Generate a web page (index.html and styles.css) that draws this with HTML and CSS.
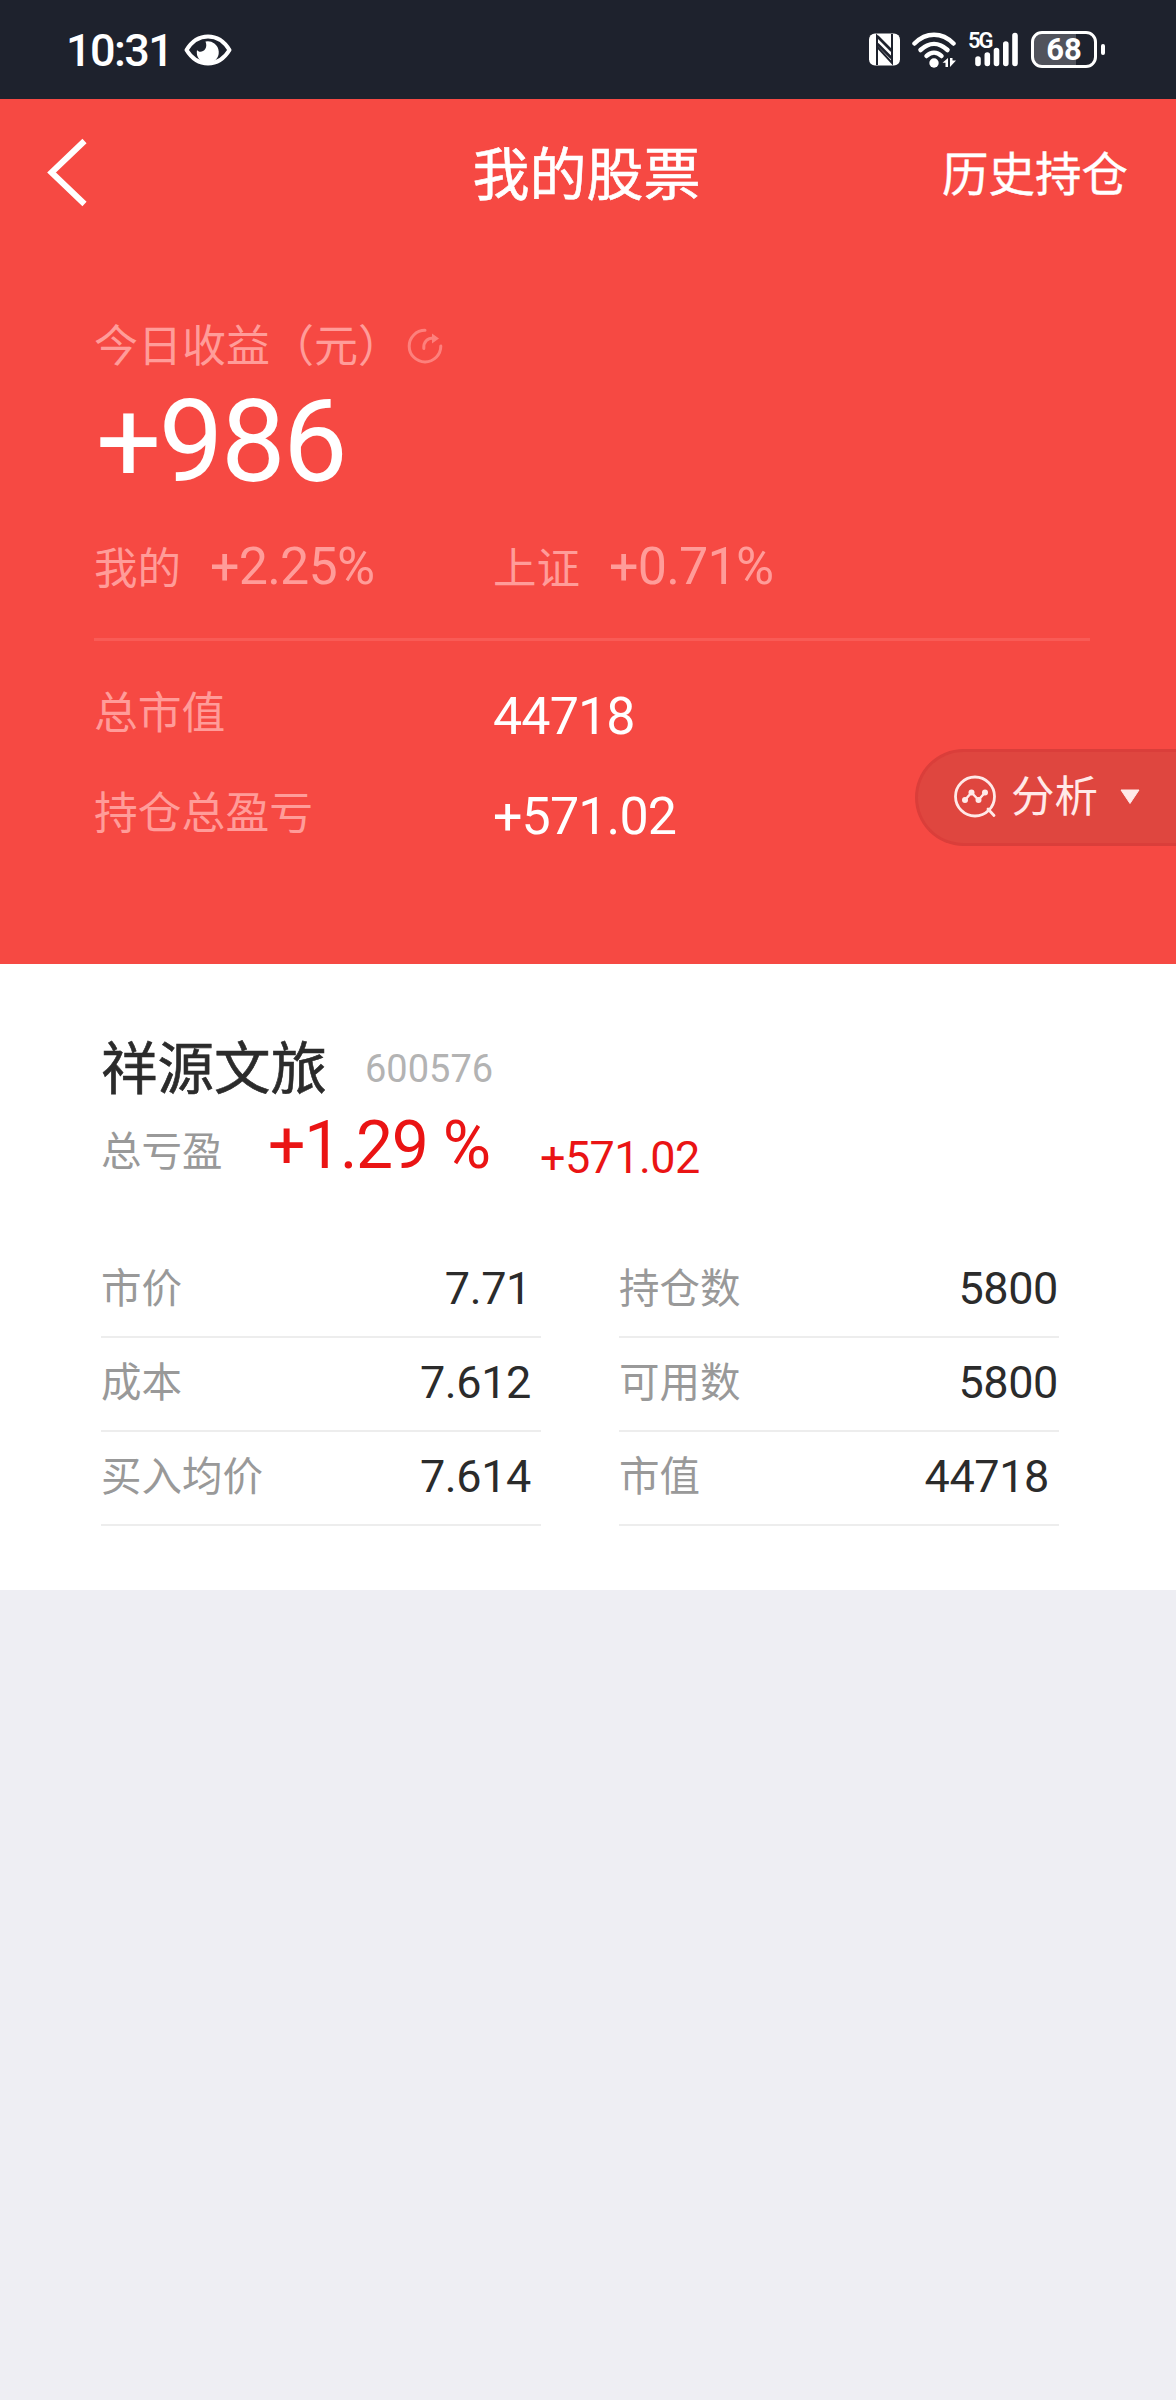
FILE: index.html
```html
<!DOCTYPE html>
<html lang="zh-CN">
<head>
    <meta charset="UTF-8">
    <meta name="viewport" content="width=device-width, initial-scale=1.0">
    <title>我的股票</title>
    <link rel="stylesheet" href="styles.css">
</head>
<body>
    <div class="status-bar">
        <span class="time">10:31</span>
        <svg class="eye" width="48" height="32" viewBox="0 0 48 32">
            <path d="M2.5 16C8 7 15 2.5 24 2.5S40 7 45.500 16C40 25 33 29.500 24 29.500S8 25 2.500 16Z" fill="none" stroke="#fff" stroke-width="4" stroke-linejoin="round"/>
            <path d="M21.500 7.500A11 11 0 1 1 13 16C16 20.500 25 16 21.500 7.500Z" fill="#fff"/>
        </svg>
        <div class="status-icons">
            <svg class="nfc" width="31" height="33" viewBox="0 0 31 33">
                <rect x="0" y="0.500" width="31" height="32" rx="6" fill="#fff"/>
                <path d="M8 32V3L22.700 18M23 1V30L8.300 14" fill="none" stroke="#1e222d" stroke-width="2"/>
                <path d="M8.500 3.500l14 14M8.500 11l14 14" stroke="#1e222d" stroke-width="2.600"/>
            </svg>
            <svg class="wifi" width="45" height="36" viewBox="0 0 45 36">
                <g fill="none" stroke="#fff" stroke-width="4.500" stroke-linecap="round">
                    <path d="M2.500 11.500C14-.2 30-.2 41.500 11.500"/>
                    <path d="M8.500 18C17 10 27 10 35.500 18"/>
                    <path d="M14.500 24C19 19.500 25 19.500 29.500 24"/>
                </g>
                <circle cx="22" cy="31" r="4.700" fill="#fff"/>
                <path d="M36 26v9h-2.500v-4.200H30.500ZM38 35v-9h2.500v2.500h3.500Z" fill="#fff"/>
            </svg>
            <div class="signal">
                <span class="network">5G</span>
                <svg width="44" height="35" viewBox="0 0 44 35">
                    <path d="M3 27v4.500M12.300 23v8.500M21.500 18.500v13M30.800 12v19.500M40 3.500v28" stroke="#fff" stroke-width="5.600" stroke-linecap="round"/>
                </svg>
            </div>
            <div class="battery"><span>68</span></div>
        </div>
    </div>

    <div class="header">
        <div class="nav">
            <svg class="back" width="42" height="70" viewBox="0 0 42 70">
                <path d="M39.500 3L6.500 34.500L39.500 66" fill="none" stroke="#fff" stroke-width="6"/>
            </svg>
            <h1>我的股票</h1>
            <a class="history">历史持仓</a>
        </div>

        <div class="summary">
            <div class="today">
                <span>今日收益（元）</span>
                <svg width="36" height="36" viewBox="0 0 36 36">
                    <g fill="none" stroke="#fd807c" stroke-width="3" stroke-linecap="round">
                        <path d="M18 2.300A15.800 15.800 0 1 0 33.800 18"/>
                        <path d="M16.800 20.500C16.500 14 20 10 27 10"/>
                    </g>
                    <path d="M25 5.500L32 10.500L25 15.500Z" fill="#fd807c"/>
                </svg>
            </div>
            <div class="today-value">+986</div>
            <div class="compare">
                <div><span class="name">我的</span><span class="rate">+2.25%</span></div>
                <div><span class="name">上证</span><span class="rate">+0.71%</span></div>
            </div>
            <div class="total"><span>总市值</span><b>44718</b></div>
            <div class="total"><span>持仓总盈亏</span><b>+571.02</b></div>
        </div>

        <div class="analysis">
            <svg width="44" height="44" viewBox="0 0 44 44">
                <g fill="none" stroke="#ffe9e8" stroke-width="2.800" stroke-linecap="round">
                    <circle cx="22" cy="21.500" r="19.500"/>
                    <path d="M35 34l6 6.500"/>
                    <path d="M12 25l6.500-7.500L25.500 25L32 17.500" stroke-width="2.400"/>
                </g>
                <g fill="#ffe9e8">
                    <circle cx="12" cy="25" r="3"/>
                    <circle cx="18.500" cy="17.500" r="3"/>
                    <circle cx="25.500" cy="25" r="3"/>
                    <circle cx="32" cy="17.500" r="3"/>
                </g>
            </svg>
            <span>分析</span>
            <svg class="caret" width="20" height="16" viewBox="0 0 20 16">
                <path d="M1 1h18L10 14.500Z" fill="#ffe9e8" stroke="#ffe9e8" stroke-linejoin="round"/>
            </svg>
        </div>
    </div>

    <div class="stock">
        <div class="stock-name">
            <h2>祥源文旅</h2>
            <span>600576</span>
        </div>
        <div class="profit">
            <span class="label">总亏盈</span>
            <span class="percent">+1.29 %</span>
            <span class="amount">+571.02</span>
        </div>
        <div class="grid">
            <div class="cell"><span>市价</span><b>7.71</b></div>
            <div class="cell"><span>持仓数</span><b class="flush">5800</b></div>
            <div class="cell"><span>成本</span><b>7.612</b></div>
            <div class="cell"><span>可用数</span><b class="flush">5800</b></div>
            <div class="cell"><span>买入均价</span><b>7.614</b></div>
            <div class="cell"><span>市值</span><b>44718</b></div>
        </div>
    </div>
</body>
</html>
```

FILE: styles.css
```css
* {
    margin: 0;
    padding: 0;
    box-sizing: border-box;
}

body {
    min-height: 2400px;
    background-color: #eeeef3;
    font-family: Roboto, "Noto Sans CJK SC", sans-serif;
    white-space: nowrap;
}

svg {
    display: block;
    flex-shrink: 0;
}

b, h1, h2 {
    font-weight: 400;
}

/* status bar */
.status-bar {
    display: flex;
    align-items: center;
    height: 99px;
    padding: 0 71px 0 66px;
    background-color: #1e222d;
    color: #fff;
}

.time {
    width: 118px;
    padding-top: 1px;
    font-size: 45px;
    font-weight: 500;
    line-height: 99px;
    letter-spacing: -1.6px;
}

.status-icons {
    display: flex;
    align-items: center;
    margin-left: auto;
}

.wifi {
    margin-left: 12px;
}

.signal {
    position: relative;
    margin-left: 18px;
}

.network {
    position: absolute;
    left: -7px;
    top: 1px;
    font-size: 22px;
    font-weight: 600;
    line-height: 16px;
    letter-spacing: -2px;
}

.battery {
    position: relative;
    width: 66px;
    height: 37px;
    margin-left: 12px;
    margin-right: 8px;
    border: 3px solid #fff;
    border-radius: 11px;
    background: linear-gradient(90deg, #51535c 70%, #1e222d 70%);
    font-size: 31px;
    font-weight: 700;
    line-height: 32px;
    text-align: center;
}

.battery::after {
    content: "";
    position: absolute;
    right: -11px;
    top: 10px;
    width: 4px;
    height: 11px;
    border-radius: 2px;
    background-color: #fff;
}

/* red header */
.header {
    position: relative;
    height: 865px;
    background-color: #f64943;
    color: #fff;
}

.nav {
    display: grid;
    grid-template-columns: 1fr auto 1fr;
    align-items: center;
    height: 148px;
    padding: 0 48px 0 45px;
}

.nav h1 {
    padding-top: 5px;
    font-size: 57px;
    line-height: 80px;
    -webkit-text-stroke: 0.6px;
}

.history {
    justify-self: end;
    padding-top: 3px;
    font-size: 46.5px;
    line-height: 80px;
    -webkit-text-stroke: 0.4px;
}

.summary {
    padding: 64px 86px 0 94px;
}

.today {
    display: flex;
    align-items: center;
    gap: 5px;
    height: 70px;
    color: #ff9c99;
    font-size: 44px;
}

.today span {
    line-height: 64px;
    padding-top: 1px;
}

.today-value {
    height: 126px;
    padding-left: 2px;
    font-size: 115px;
    line-height: 122px;
    letter-spacing: -2.5px;
}

.compare {
    display: grid;
    grid-template-columns: 399px 1fr;
    height: 134px;
    padding-top: 28px;
    border-bottom: 3px solid #f95b56;
    color: #ff9c99;
    line-height: 68px;
}

.compare div {
    display: flex;
}

.name {
    width: 116px;
    padding-top: 1px;
    font-size: 43.5px;
}

.rate {
    margin-top: -2px;
    font-size: 52px;
    letter-spacing: -0.8px;
}

.total {
    display: grid;
    grid-template-columns: 399px 1fr;
    height: 100px;
    color: #ff9c99;
    font-size: 43.8px;
    line-height: 102px;
}

.compare + .total {
    margin-top: 22px;
}

.total b {
    padding-top: 3px;
    color: #fff;
    font-size: 52px;
    letter-spacing: -0.9px;
}

.analysis {
    position: absolute;
    right: 0;
    top: 650px;
    display: flex;
    align-items: center;
    width: 261px;
    height: 97px;
    padding-left: 35px;
    padding-bottom: 2px;
    border: 3px solid #da3e3a;
    border-right: none;
    border-radius: 49px 0 0 49px;
    background-color: #df463f;
    color: #ffe9e8;
    font-size: 43.5px;
}

.analysis span {
    margin-left: 14px;
    padding-top: 2px;
    line-height: 64px;
}

.caret {
    margin-left: 22px;
}

/* stock card */
.stock {
    height: 626px;
    padding: 64px 117px 0 101px;
    background-color: #fff;
    color: #2b2b2b;
}

.stock-name {
    display: flex;
    height: 80px;
    line-height: 80px;
}

.stock-name h2 {
    width: 264px;
    padding-top: 2px;
    font-size: 56.5px;
    -webkit-text-stroke: 0.6px;
}

.stock-name span {
    padding-top: 1px;
    color: #b3b3b3;
    font-size: 38px;
}

.profit {
    display: flex;
    height: 80px;
    color: #ea1414;
    line-height: 80px;
}

.profit .label {
    width: 167px;
    padding-top: 4px;
    color: #999;
    font-size: 40.5px;
}

.percent {
    width: 272px;
    margin-top: -2px;
    font-size: 66px;
    letter-spacing: -1.3px;
}

.amount {
    padding-top: 10px;
    font-size: 45px;
    letter-spacing: -0.6px;
}

.grid {
    display: grid;
    grid-template-columns: 440px 440px;
    column-gap: 78px;
    margin-top: 56px;
}

.cell {
    display: flex;
    justify-content: space-between;
    height: 94px;
    padding-right: 10px;
    border-bottom: 2px solid #ededed;
    line-height: 90px;
}

.cell span {
    color: #999;
    font-size: 40.5px;
}

.cell b {
    font-size: 45px;
    letter-spacing: -0.4px;
}

.cell .flush {
    margin-right: -9px;
}
```
